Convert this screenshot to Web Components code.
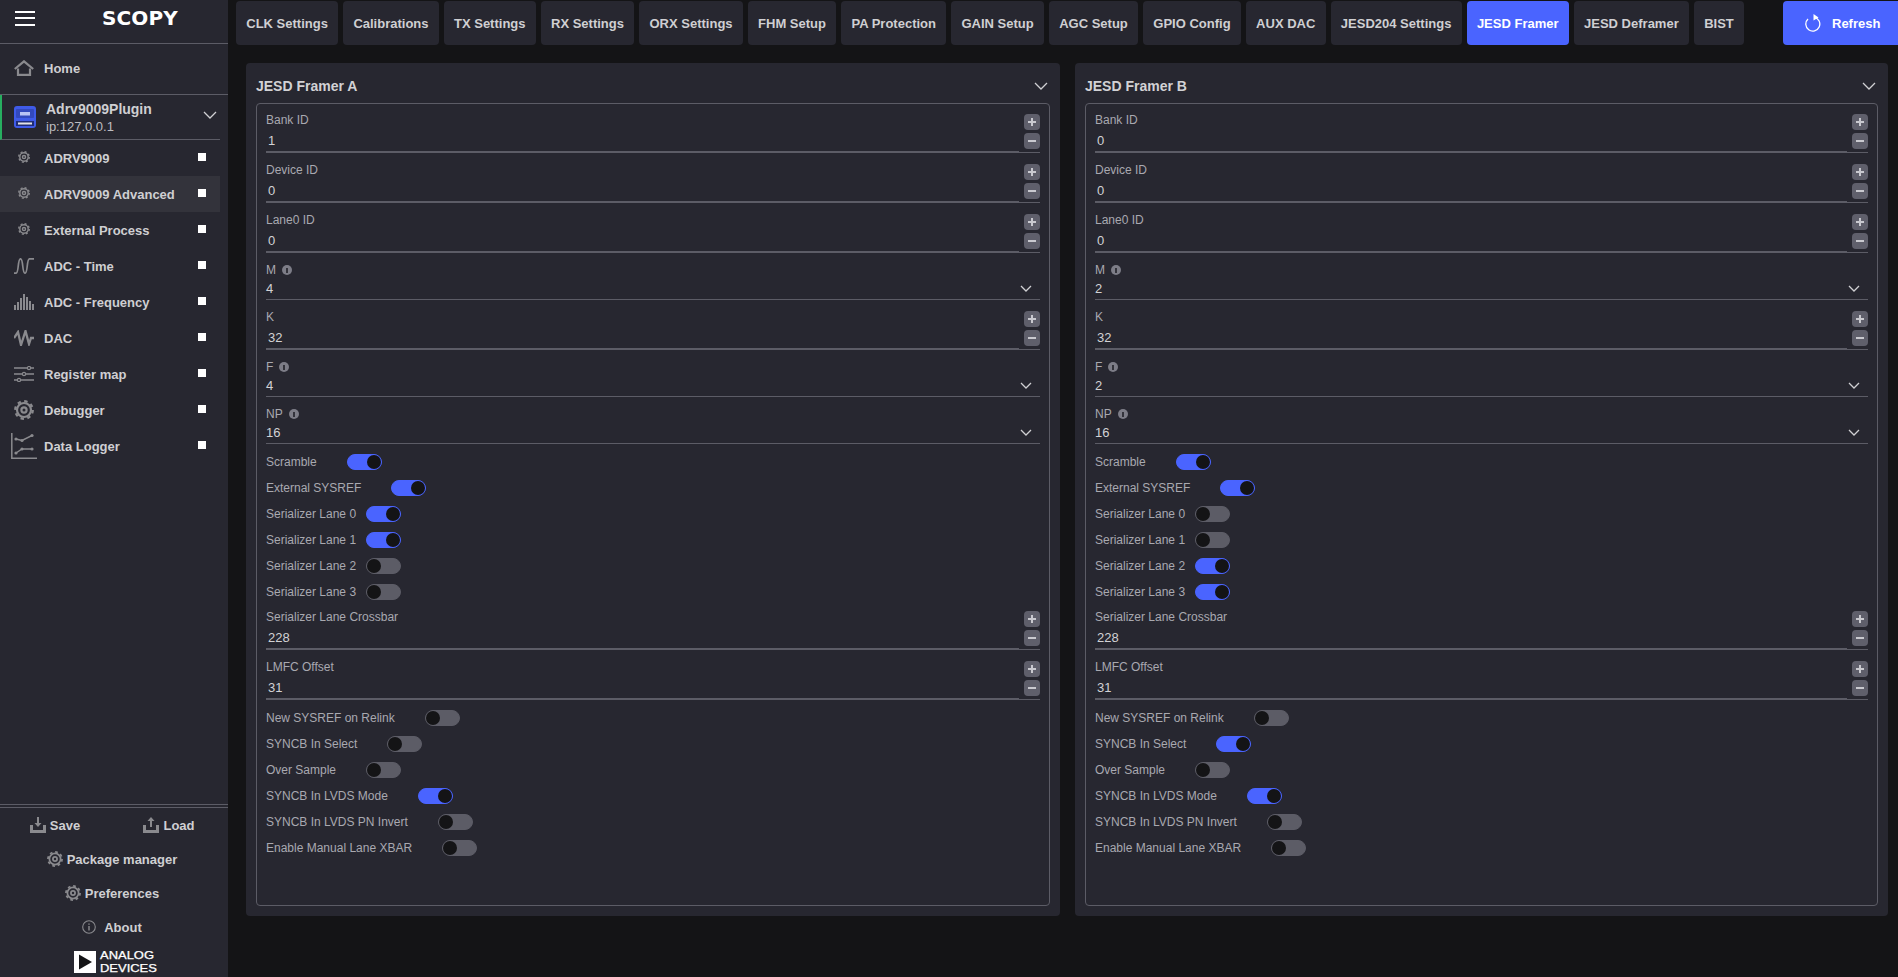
<!DOCTYPE html>
<html><head><meta charset="utf-8"><title>Scopy</title>
<style>
html,body{margin:0;height:977px;overflow:hidden;background:#141416;font-family:"Liberation Sans",Arial,sans-serif}
scopy-app{display:flex;height:977px}
</style></head><body>
<scopy-app>
  <side-bar slot="side"></side-bar>
  <top-bar slot="top"></top-bar>
  <framer-panel slot="panels" title="JESD Framer A" m="4" f="4" bank="1" sers="1100" vals="000100"></framer-panel>
  <framer-panel slot="panels" title="JESD Framer B" m="2" f="2" bank="0" sers="0011" vals="010100"></framer-panel>
</scopy-app>
<script>
const gear=(s,w=2)=>`<svg width="${s}" height="${s}" viewBox="0 0 20 20" fill="none" stroke="#8a8a8e"><circle cx="10" cy="10" r="7" stroke-width="${w}"/><circle cx="10" cy="10" r="8.8" stroke-width="2.2" stroke-dasharray="3.4 3.5"/><circle cx="10" cy="10" r="2.6" stroke-width="${w}"/></svg>`;
const ICONS={
home:`<svg width="20" height="16" viewBox="0 0 20 16" fill="none" stroke="#8a8a8e" stroke-width="2.2"><path d="M.8 9 10 1.300 19.200 9"/><path d="M4 8.500v6.400h12V8.500"/><path d="M7.500 12.300h5" stroke-width="1.600" stroke="#272730"/></svg>`,
gear:gear(12,2.4),
time:`<svg width="20" height="16" viewBox="0 0 20 16" fill="none" stroke="#8a8a8e" stroke-width="1.700"><path d="M0 15.200H2C5 15.200 3.500 .8 6.500 .8S8 15.200 11 15.200 12.500 .8 15.500 .8H20"/></svg>`,
freq:`<svg width="20" height="16" viewBox="0 0 20 16" fill="#8a8a8e"><rect y="11" width="2" height="5"/><rect x="3" y="8" width="2" height="8"/><rect x="6" y="4" width="2" height="12"/><rect x="9" y="0" width="2" height="16"/><rect x="12" y="3" width="2" height="13"/><rect x="15" y="7" width="2" height="9"/><rect x="18" y="10" width="2" height="6"/></svg>`,
dac:`<svg width="20" height="16" viewBox="0 0 20 16" fill="none" stroke="#8a8a8e" stroke-width="2.300"><path d="M0 8 4 2l3 13 4.500-14L15 14l2-6h3"/></svg>`,
reg:`<svg width="20" height="16" viewBox="0 0 20 16" fill="none" stroke="#8a8a8e" stroke-width="1.500"><path d="M0 2h13M17 2h3M0 8h8M12 8h8M0 14h3M7 14h13"/><circle cx="15" cy="2" r="1.600" stroke-width="1.200"/><circle cx="10" cy="8" r="1.600" stroke-width="1.200"/><circle cx="5" cy="14" r="1.600" stroke-width="1.200"/></svg>`,
dbg:gear(20,2.2),
log:`<svg width="26" height="26" viewBox="0 0 26 26" fill="none" stroke="#8a8a8e" stroke-width="1.500"><path d="M.8 0v25.200H26"/><path d="M5 6l6 1.500L21 2.500M5 20l6-4 10 0" stroke-width="1.400"/><g fill="#8a8a8e" stroke="none"><circle cx="5" cy="6" r="1.600"/><circle cx="11" cy="7.500" r="1.600"/><circle cx="21" cy="2.500" r="1.600"/><circle cx="5" cy="20" r="1.600"/><circle cx="11" cy="16" r="1.600"/><circle cx="21" cy="16" r="1.600"/></g></svg>`,
save:`<svg width="16" height="16" viewBox="0 0 16 16" fill="#8a8a8e"><path d="M7 0h2v6h2.500L8 10 4.500 6H7zM0 8h3v5h10V8h3v8H0z"/></svg>`,
load:`<svg width="16" height="16" viewBox="0 0 16 16" fill="#8a8a8e"><path d="M8 0l3.500 4H9v6H7V4H4.500zM0 8h3v5h10V8h3v8H0z"/></svg>`,
pref:gear(16,2.2),
about:`<svg width="14" height="14" viewBox="0 0 14 14" fill="none" stroke="#8a8a8e" stroke-width="1.100"><circle cx="7" cy="7" r="6.300"/><path d="M7 6v4.500M7 3.500v1.200" stroke-width="1.400"/></svg>`
};
function def(name,html){
  customElements.define(name,class extends HTMLElement{
    connectedCallback(){
      if(this.shadowRoot)return;
      this.attachShadow({mode:'open'}).innerHTML=typeof html==='function'?html(this):html;
    }
  });
}
def('scopy-app',`<style>
:host{display:flex;height:977px}
.main{flex:1;min-width:0;display:flex;flex-direction:column}
.panels{display:grid;grid-template-columns:814px 813px;gap:15px;padding:18px 0 0 18px}
</style><slot name="side"></slot><div class="main"><slot name="top"></slot><div class="panels"><slot name="panels"></slot></div></div>`);

def('side-item',h=>{const ic=h.getAttribute('icon');return `<style>
:host{display:flex;align-items:center;height:36px;width:220px;box-sizing:border-box;color:#cfcfd2;font-weight:700;font-size:13px;padding-top:1px}
:host([active]){background:#33333b}
.i{width:48px;display:flex;justify-content:center;flex:none;margin-top:${ic==='gear'?-4:-1}px}
.t{flex:1;margin-left:-4px}
.sq{width:8px;height:8px;background:#fff;margin:-3px 14px 0 0}
</style><div class="i">${ICONS[ic]}</div><span class="t">${h.getAttribute('label')}</span><span class="sq"></span>`});

def('foot-link',h=>`<style>
:host{display:flex;align-items:center;justify-content:center;height:34px;gap:${h.getAttribute('gap')||4}px;color:#cfcfd2;font-weight:700;font-size:13px}
</style>${ICONS[h.getAttribute('icon')]}<span>${h.getAttribute('label')}</span>`);

def('side-bar',`<style>
:host{display:flex;flex-direction:column;width:228px;flex:none;height:977px;background:#272730;box-sizing:border-box}
.head{height:44px;display:flex;flex:none;box-sizing:border-box;border-bottom:1px solid #5c5c66;align-items:center}
.burger{margin-left:15px;width:20px;height:15px;display:flex;flex-direction:column;justify-content:space-between;margin-top:-7px}
.burger i{height:2px;background:#fff;display:block}
.logo{margin-left:67px;margin-top:-7px;width:77px;color:#fff;font:700 20px/20px "DejaVu Sans",sans-serif;letter-spacing:.1px;white-space:nowrap}
.home{height:51px;flex:none;box-sizing:border-box;border-bottom:1px solid #5c5c66;display:flex;align-items:center;color:#cfcfd2;font-weight:700;font-size:13px;padding-bottom:2px}
.home span{display:flex;margin:0 10px 0 14px}
.plug{height:45px;flex:none;box-sizing:border-box;width:220px;border-left:2px solid #27ae60;border-bottom:1px solid #5c5c66;display:flex;align-items:center;position:relative}
.plug svg.d{margin:0 10px 0 12px}
.names{flex:1;color:#cfcfd2}
.n{font-weight:700;font-size:14px;line-height:18px;padding-top:1px}
.ip{font-size:13px;line-height:18px;color:#bdbdc1}
.chev{position:absolute;left:201px;top:16px}
.sp{flex:1}
.foot{flex:none;border-top:1px solid #5c5c66;padding-top:2px}
.foot .l2{border-top:1px solid #5c5c66;height:0}
.row{display:grid;grid-template-columns:110px 118px}
.c{display:flex;flex-direction:column;padding-right:4px}
.ad{display:flex;justify-content:center;gap:4px;margin-top:7px;height:26px;color:#fff}
.txt{width:54px;font-size:10.8px;line-height:12.5px;height:25px;margin-top:-2px;-webkit-text-stroke:.25px #fff;white-space:nowrap}
.txt div{transform:scaleX(1.2);transform-origin:0 50%}
</style>
<div class="head"><div class="burger"><i></i><i></i><i></i></div><div class="logo">SCOPY</div></div>
<div class="home"><span>${ICONS.home}</span>Home</div>
<div class="plug"><svg class="d" width="22" height="22" viewBox="0 0 22 22"><rect width="22" height="22" rx="3" fill="#3f5be8"/><rect x="2" y="3" width="18" height="9" rx="1" fill="#3349bd"/><rect x="6" y="6" width="10" height="3.500" fill="#b9c3f5"/><rect x="2" y="15" width="18" height="5" fill="#1f2c77"/><rect x="4" y="16.500" width="14" height="2" fill="#e3e3e3"/></svg>
<div class="names"><div class="n">Adrv9009Plugin</div><div class="ip">ip:127.0.0.1</div></div>
<svg class="chev" width="14" height="8" viewBox="0 0 14 8" fill="none" stroke="#d0d0d3" stroke-width="1.300"><path d="M1 1l6 6 6-6"/></svg></div>
<side-item icon="gear" label="ADRV9009"></side-item>
<side-item icon="gear" label="ADRV9009 Advanced" active></side-item>
<side-item icon="gear" label="External Process"></side-item>
<side-item icon="time" label="ADC - Time"></side-item>
<side-item icon="freq" label="ADC - Frequency"></side-item>
<side-item icon="dac" label="DAC"></side-item>
<side-item icon="reg" label="Register map"></side-item>
<side-item icon="dbg" label="Debugger"></side-item>
<side-item icon="log" label="Data Logger"></side-item>
<div class="sp"></div>
<div class="foot"><div class="l2"></div>
<div class="row"><foot-link icon="save" label="Save"></foot-link><foot-link icon="load" label="Load"></foot-link></div>
<div class="c"><foot-link icon="pref" label="Package manager"></foot-link><foot-link icon="pref" label="Preferences"></foot-link><foot-link icon="about" label="About" gap="8"></foot-link>
</div>
<div class="ad"><svg width="22" height="22" viewBox="0 0 22 22"><rect width="22" height="22" fill="#fff"/><path d="M5 3.500 18 11 5 18.500z" fill="#141416"/></svg><div class="txt"><div>ANALOG</div><div>DEVICES</div></div></div>
</div>`);

def('tab-btn',`<style>
:host{display:flex;align-items:center;justify-content:center;height:44px;box-sizing:border-box;padding:0 10.25px;border-radius:4px;background:#272730;color:#cfcfd2;font-weight:700;font-size:13px;white-space:nowrap}
:host([active]){background:#4a64ff;color:#fff}
</style><slot></slot>`);

def('top-bar',`<style>
:host{display:flex;gap:5px;padding:1px 0 0 8px;height:45px;box-sizing:border-box;flex:none}
.r{margin-left:auto;width:115px;height:44px;background:#4a64ff;border-radius:4px 0 0 4px;color:#fff;font-weight:700;font-size:13px;display:flex;align-items:center;gap:11px;padding-left:22px;box-sizing:border-box}
</style>
<tab-btn>CLK Settings</tab-btn><tab-btn>Calibrations</tab-btn><tab-btn>TX Settings</tab-btn><tab-btn>RX Settings</tab-btn><tab-btn>ORX Settings</tab-btn><tab-btn>FHM Setup</tab-btn><tab-btn>PA Protection</tab-btn><tab-btn>GAIN Setup</tab-btn><tab-btn>AGC Setup</tab-btn><tab-btn>GPIO Config</tab-btn><tab-btn>AUX DAC</tab-btn><tab-btn>JESD204 Settings</tab-btn><tab-btn active>JESD Framer</tab-btn><tab-btn>JESD Deframer</tab-btn><tab-btn>BIST</tab-btn>
<div class="r"><svg width="16" height="18" viewBox="0 0 16 18" fill="none" stroke="#fff" stroke-width="1.300"><path d="M9.500 3.300A7 7 0 1 1 3 5"/><path d="M8.500 0l5 3.400-5 3z" fill="#fff" stroke="none"/></svg><span>Refresh</span></div>`);

const base=`:host{display:block;font-size:12px;color:#a9a9b0}
.lb{height:20px;line-height:20px;display:flex;align-items:center;gap:6px}
.v{color:#d2d2d5;font-size:13px}
.info{width:10px;height:10px;border-radius:50%;background:#7d7d87;position:relative;display:block}
.info:after{content:"";position:absolute;left:4px;top:2.500px;width:2px;height:5px;background:#33333b}`;

def('spin-field',h=>`<style>${base}
:host{height:50px}
.w{display:flex;height:43px;box-sizing:border-box;border-bottom:1px solid #5c5c66;margin-top:-20px}
.l{flex:1;height:43px;box-sizing:border-box;border-bottom:2px solid #5c5c66;padding:20px 0 0 2px;line-height:21px;margin-right:5px}
.b{width:16px;padding-top:4px;display:flex;flex-direction:column;gap:3px}
.b i{display:flex;width:16px;height:16px;border-radius:4px;background:#5f5f6b;align-items:center;justify-content:center}
</style><div class="lb">${h.getAttribute('label')}</div><div class="w"><div class="l v">${h.getAttribute('value')}</div><div class="b">
<i><svg width="8" height="8" viewBox="0 0 8 8" fill="none" stroke="#c9c9cf" stroke-width="2"><path d="M0 4h8M4 0v8"/></svg></i>
<i><svg width="8" height="8" viewBox="0 0 8 8" fill="none" stroke="#c9c9cf" stroke-width="2"><path d="M0 4h8"/></svg></i></div></div>`);

def('combo-field',h=>`<style>${base}
:host{height:47px}
.w{height:20px;box-sizing:border-box;border-bottom:1px solid #5c5c66;display:flex;justify-content:space-between;align-items:center;padding-bottom:2px}
.w svg{margin-right:8px}
</style><div class="lb">${h.getAttribute('label')}<i class="info"></i></div><div class="w"><span class="v">${h.getAttribute('value')}</span><svg width="12" height="7" viewBox="0 0 12 7" fill="none" stroke="#d0d0d3" stroke-width="1.300"><path d="M1 1l5 5 5-5"/></svg></div>`);

def('toggle-row',h=>{const on=h.hasAttribute('on');return `<style>${base}
:host{height:26px;display:flex;align-items:center;gap:${h.getAttribute('gap')||30}px}
.t{width:35px;height:16px;border-radius:8px;box-sizing:border-box;display:flex;align-items:center;background:${on?'#4a64ff':'#5c5c66'};justify-content:${on?'flex-end':'flex-start'};border:1px solid ${on?'#4a64ff':'#5c5c66'}}
.t i{width:14px;height:14px;border-radius:50%;background:#141416;display:block}
</style><span>${h.getAttribute('label')}</span><span class="t"><i></i></span>`});

def('framer-panel',h=>{
 const a=n=>h.getAttribute(n),s=a('sers'),v=a('vals');
 const t=(l,on,g)=>`<toggle-row label="${l}" ${on?'on':''} ${g?`gap="${g}"`:''}></toggle-row>`;
 return `<style>
:host{display:block;height:853px;box-sizing:border-box;background:#272730;border-radius:4px;padding:0 10px 10px}
.h{height:40px;display:flex;align-items:center;justify-content:space-between;color:#d2d2d5;font-weight:700;font-size:14px;padding-top:5px;box-sizing:border-box}
.h svg{margin-right:2px}
.b{height:803px;box-sizing:border-box;border:1px solid #5c5c66;border-radius:4px;padding:6px 9px 0}
.g{margin:-2px 0 2px}
.last{margin:-2px 0 0}
</style><div class="h"><span>${a('title')}</span><svg width="14" height="8" viewBox="0 0 14 8" fill="none" stroke="#d0d0d3" stroke-width="1.300"><path d="M1 1l6 6 6-6"/></svg></div>
<div class="b">
<spin-field label="Bank ID" value="${a('bank')}"></spin-field>
<spin-field label="Device ID" value="0"></spin-field>
<spin-field label="Lane0 ID" value="0"></spin-field>
<combo-field label="M" value="${a('m')}"></combo-field>
<spin-field label="K" value="32"></spin-field>
<combo-field label="F" value="${a('f')}"></combo-field>
<combo-field label="NP" value="16"></combo-field>
<div class="g">${t('Scramble',1)}${t('External SYSREF',1)}${t('Serializer Lane 0',s[0]==='1',10)}${t('Serializer Lane 1',s[1]==='1',10)}${t('Serializer Lane 2',s[2]==='1',10)}${t('Serializer Lane 3',s[3]==='1',10)}</div>
<spin-field label="Serializer Lane Crossbar" value="228"></spin-field>
<spin-field label="LMFC Offset" value="31"></spin-field>
<div class="last">${t('New SYSREF on Relink',v[0]==='1')}${t('SYNCB In Select',v[1]==='1')}${t('Over Sample',v[2]==='1')}${t('SYNCB In LVDS Mode',v[3]==='1')}${t('SYNCB In LVDS PN Invert',v[4]==='1')}${t('Enable Manual Lane XBAR',v[5]==='1')}</div>
</div>`});
</script>
</body></html>
